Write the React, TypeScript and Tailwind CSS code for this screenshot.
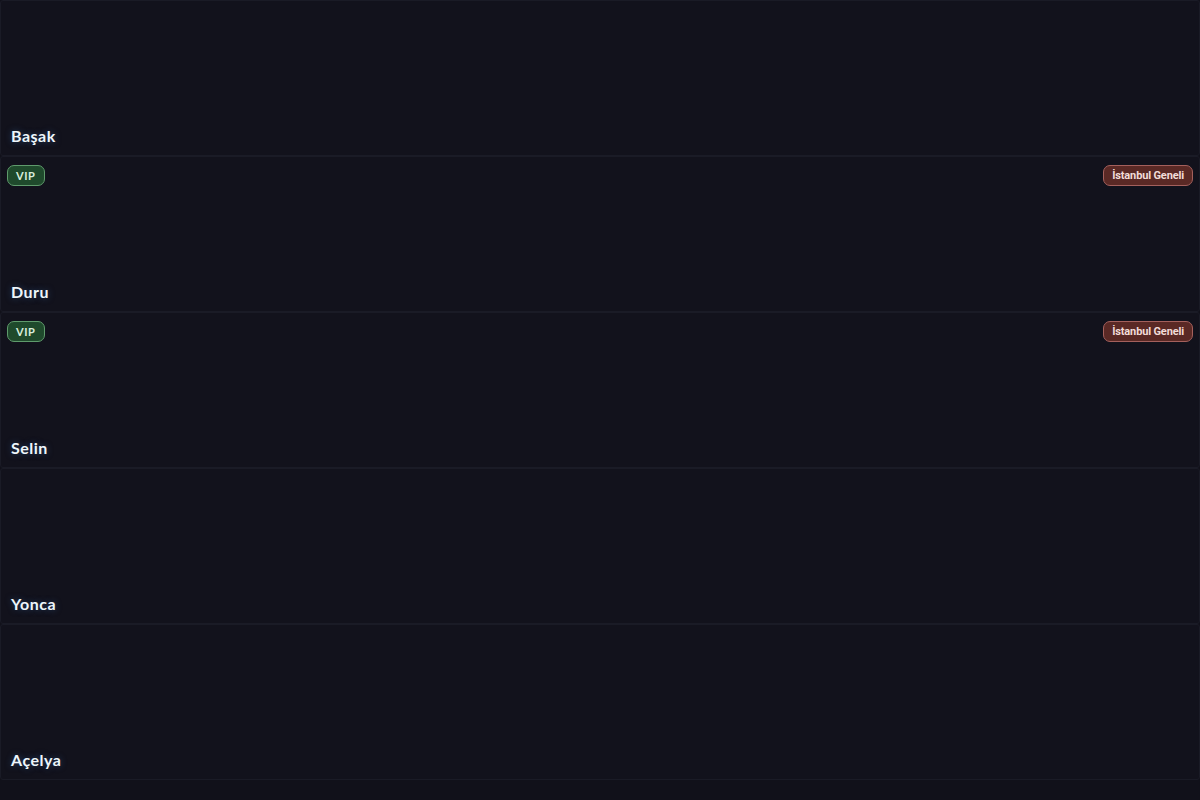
import React from "react"

type Profile = {
    name: string
    vip?: boolean
    region?: string
}

const profiles: Profile[] = [
    { name: "Başak" },
    { name: "Duru", vip: true, region: "İstanbul Geneli" },
    { name: "Selin", vip: true, region: "İstanbul Geneli" },
    { name: "Yonca" },
    { name: "Açelya" },
]

const ProfileCard = ({ profile }: { profile: Profile }) => {
    return (
        <section className="relative h-[156px] shrink-0 rounded-[3px] border border-[#1a1b26] bg-[#12121c] flex flex-col justify-between px-[10px] pt-[8px] pb-[9px]">
            <div className="flex justify-between items-start -mx-[4px]">
                {profile.vip ? (
                    <span className="h-[21px] px-[8px] pt-px flex items-center rounded-[7px] border border-[#5f9b6c] bg-[#1f4a2c] text-[11px] font-bold tracking-[0.6px] text-[#d9eedc] font-['Lato',sans-serif]">
                        VIP
                    </span>
                ) : <span />}
                {profile.region && (
                    <span className="h-[21px] px-[8px] pt-px flex items-center rounded-[7px] border border-[#a4605c] bg-[#5a2925] text-[11px] font-bold text-[#f2dcd8] font-['Roboto',sans-serif] tracking-[-0.15px]">
                        {profile.region}
                    </span>
                )}
            </div>
            <h2 className="text-[16px] leading-[20px] font-bold tracking-[0.5px] text-[#eef6fb] font-['Lato',sans-serif] [text-shadow:0_0_6px_rgba(40,70,110,0.9)]">
                {profile.name}
            </h2>
        </section>
    )
}

const App = () => {
    return (
        <main className="h-[800px] overflow-hidden bg-[#11111a] flex flex-col">
            {profiles.map((p) => (
                <ProfileCard key={p.name} profile={p} />
            ))}
        </main>
    )
}

export default App
